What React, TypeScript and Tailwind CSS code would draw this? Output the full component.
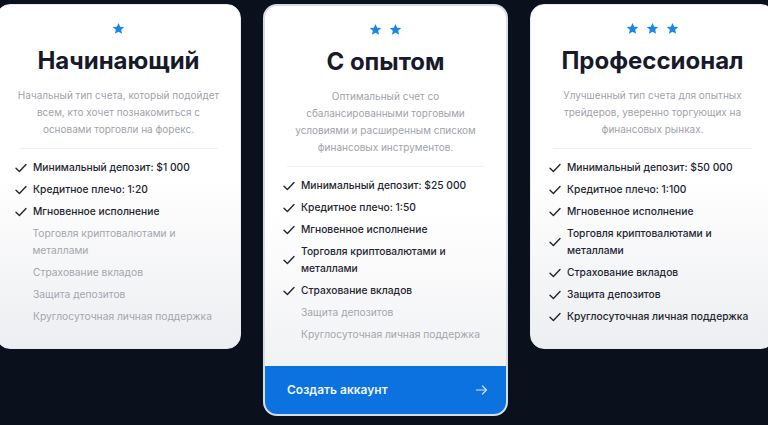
import React from "react";

type Feature = { text: string; on: boolean };

interface Plan {
  stars: number;
  title: string;
  description: string;
  features: Feature[];
  cta?: boolean;
}

const labels = [
  "Минимальный депозит",
  "Кредитное плечо",
  "Мгновенное исполнение",
  "Торговля криптовалютами и металлами",
  "Страхование вкладов",
  "Защита депозитов",
  "Круглосуточная личная поддержка",
];

const makeFeatures = (deposit: string, leverage: string, activeCount: number): Feature[] =>
  labels.map((label, i) => ({
    text: i === 0 ? `${label}: ${deposit}` : i === 1 ? `${label}: ${leverage}` : label,
    on: i < activeCount,
  }));

const plans: Plan[] = [
  {
    stars: 1,
    title: "Начинающий",
    description:
      "Начальный тип счета, который подойдет всем, кто хочет познакомиться с основами торговли на форекс.",
    features: makeFeatures("$1 000", "1:20", 3),
  },
  {
    stars: 2,
    title: "С опытом",
    description:
      "Оптимальный счет со сбалансированными торговыми условиями и расширенным списком финансовых инструментов.",
    features: makeFeatures("$25 000", "1:50", 5),
    cta: true,
  },
  {
    stars: 3,
    title: "Профессионал",
    description:
      "Улучшенный тип счета для опытных трейдеров, уверенно торгующих на финансовых рынках.",
    features: makeFeatures("$50 000", "1:100", 7),
  },
];

const Star = () => (
  <svg width="13" height="13" viewBox="0 0 24 24" className="text-[#1a86e6]">
    <path
      fill="currentColor"
      d="M12 1.8l3.1 6.9 7.5.7-5.7 5 1.7 7.4L12 17.9l-6.6 3.9 1.7-7.4-5.7-5 7.5-.7z"
    />
  </svg>
);

const CheckIcon = () => (
  <svg width="12" height="10" viewBox="0 0 12 10" className="shrink-0 text-[#23262f]">
    <path d="M1 5.2l3.4 3.3L11 1.5" fill="none" stroke="currentColor" strokeWidth="1.4" strokeLinecap="round" strokeLinejoin="round" />
  </svg>
);

const PlanCard = ({ plan }: { plan: Plan }) => (
  <div
    className={`w-[245px] shrink-0 rounded-[14px] overflow-hidden bg-gradient-to-b from-white via-white to-[#edeef1] ${
      plan.cta ? "border-2 border-[#d7dde5]" : "border border-[#e9ebef]"
    }`}
  >
    <div className="px-[16px] pt-[17px] pb-[23px]">
      {/* Stars */}
      <div className="flex justify-center gap-[7px]">
        {Array.from({ length: plan.stars }).map((_, i) => (
          <Star key={i} />
        ))}
      </div>

      <h2 className="mt-[10px] text-center text-[24px] leading-[32px] font-bold text-[#171a2b]">
        {plan.title}
      </h2>

      <p className="mt-[10px] text-center text-[10px] leading-[17px] text-[#9fa3aa]">
        {plan.description}
      </p>

      <div className="mx-[6px] mt-[10px] h-px bg-[#eef0f2]" />

      <ul className="mt-[10px] flex flex-col gap-[5px] pl-[2px]">
        {plan.features.map((f) => (
          <li key={f.text} className="flex items-center gap-[7px]">
            <div className="w-[11px] flex justify-center">{f.on && <CheckIcon />}</div>
            <span
              className={`text-[10.25px] leading-[17px] ${
                f.on ? "text-[#22252f] font-medium" : "text-[#a4a7ae] font-normal"
              }`}
            >
              {f.text}
            </span>
          </li>
        ))}
      </ul>
    </div>

    {plan.cta && (
      <button className="flex h-[48px] w-full items-center justify-between bg-[#0b72e0] pl-[22px] pr-[18px] text-[#eef5fe]">
        <span className="text-[12px] font-semibold">Создать аккаунт</span>
        <svg width="12" height="10" viewBox="0 0 12 10" className="text-[#cfe3fb]">
          <path d="M0.5 5h10M6.5 1l4 4-4 4" fill="none" stroke="currentColor" strokeWidth="1.2" strokeLinecap="round" strokeLinejoin="round" />
        </svg>
      </button>
    )}
  </div>
);

export default function App() {
  return (
    <div
      className="h-[425px] w-[768px] overflow-hidden bg-[#0a101c]"
      style={{ fontFamily: "Inter, 'Noto Sans', sans-serif" }}
    >
      <div className="ml-[-4px] flex items-start gap-[22px] pt-[4px]">
        {plans.map((p) => (
          <PlanCard key={p.title} plan={p} />
        ))}
      </div>
    </div>
  );
}
